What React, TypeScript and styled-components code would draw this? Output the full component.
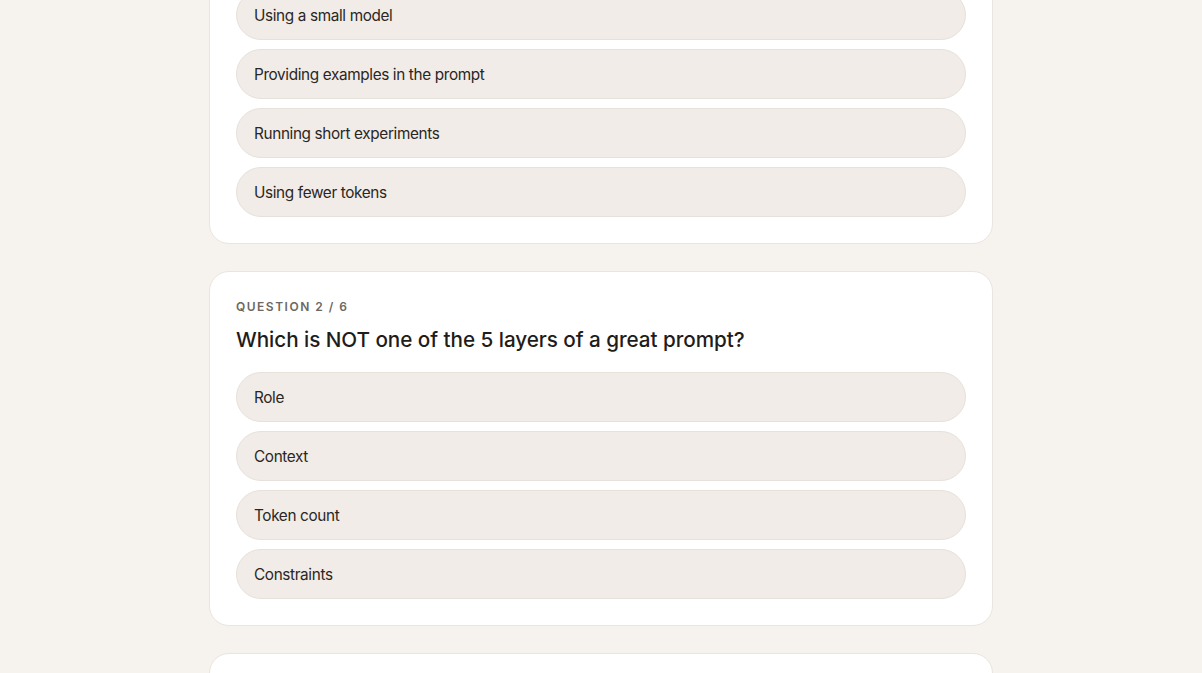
import React from 'react';
import styled, { createGlobalStyle } from 'styled-components';

interface Question {
  id: number;
  title: string;
  options: string[];
}

const TOTAL = 6;

const questions: Question[] = [
  {
    id: 1,
    title: 'What is the fastest way to improve output quality?',
    options: [
      'Using a small model',
      'Providing examples in the prompt',
      'Running short experiments',
      'Using fewer tokens',
    ],
  },
  {
    id: 2,
    title: 'Which is NOT one of the 5 layers of a great prompt?',
    options: ['Role', 'Context', 'Token count', 'Constraints'],
  },
  {
    id: 3,
    title: 'What should you do when an answer looks wrong?',
    options: ['Ask again', 'Add context', 'Change model', 'Give up'],
  },
];

const App: React.FC = () => {
  return (
    <>
      <GlobalStyle />
      <Page>
        {questions.map((q) => (
          <QuestionCard key={q.id}>
            <Label>
              Question {q.id} / {TOTAL}
            </Label>
            <Title>{q.title}</Title>
            <Options>
              {q.options.map((opt) => (
                <Option key={opt} type='button'>
                  {opt}
                </Option>
              ))}
            </Options>
          </QuestionCard>
        ))}
      </Page>
    </>
  );
};

const GlobalStyle = createGlobalStyle`
  html, body {
    margin: 0;
    padding: 0;
    background: #f6f3ef;
    overflow: hidden;
  }
  body {
    font-family: Inter, 'Liberation Sans', sans-serif;
    color: #2a2623;
  }
`;

const Page = styled.main`
  width: 784px;
  margin: -111px auto 0;
  display: flex;
  flex-direction: column;
  gap: 27px;
`;

const QuestionCard = styled.section`
  background: #ffffff;
  border: 1px solid #e9e5e0;
  border-radius: 20px;
  padding: 27px 26px 26px;
  display: flex;
  flex-direction: column;
`;

const Label = styled.div`
  font-size: 12px;
  font-weight: 600;
  letter-spacing: 1.5px;
  text-transform: uppercase;
  color: #6d6862;
  line-height: 16px;
`;

const Title = styled.h2`
  margin: 11px 0 18px;
  font-size: 20.7px;
  font-weight: 500;
  line-height: 28px;
  color: #1f1c19;
  letter-spacing: -0.05px;
`;

const Options = styled.div`
  display: flex;
  flex-direction: column;
  gap: 9px;
`;

const Option = styled.button`
  height: 50px;
  padding: 0 17px;
  border: 1px solid #e6e1db;
  border-radius: 25px;
  background: #f1ece7;
  font-family: inherit;
  font-size: 15.3px;
  letter-spacing: -0.35px;
  color: #2a2623;
  text-align: left;
  cursor: pointer;
`;

export default App;
